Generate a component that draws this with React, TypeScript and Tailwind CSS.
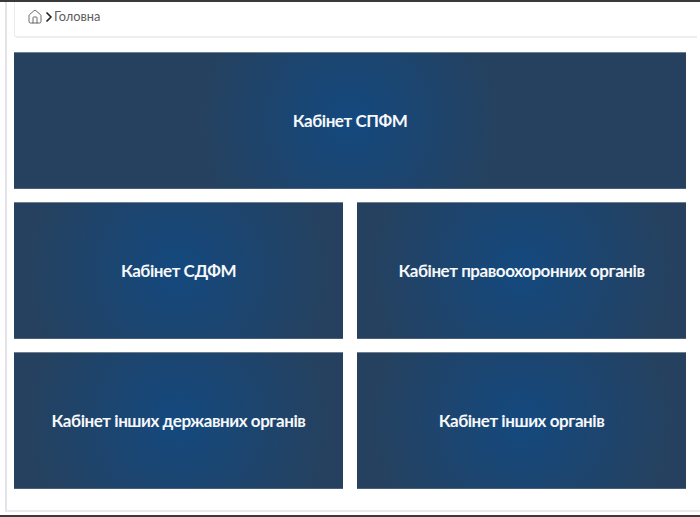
import { Home, ChevronRight } from 'lucide-react';

const cardClass =
  "flex items-center justify-center h-[136.6px] bg-[radial-gradient(circle_150px_at_center,#14497f_0%,#25415f_100%)] border-t border-t-[#6f7f90] border-b border-b-[#4b5f75] text-[#f6f8fa] text-[17px] font-bold tracking-[-0.45px]";

function Card({ title }: { title: string }) {
  return (
    <div className={cardClass}>
      <span>{title}</span>
    </div>
  );
}

export default function App() {
  return (
    <div className="h-[517px] w-[700px] overflow-hidden bg-[#3a3a3a] pt-[2px] pb-[2px] font-['Lato','Noto_Sans',sans-serif]">
      <div className="h-full bg-white pl-[5px] flex">
        <div className="flex-1 flex flex-col border-l-2 border-l-[#e4e4e8] border-b-2 border-b-[#e9e9ec] mb-[3px] pl-[7px] pr-[14px]">
          {/* Breadcrumb */}
          <div className="h-[36px] -mr-[11px] flex items-center pl-[13px] pb-[5px] border-l border-l-[#ececec] border-b-2 border-b-[#eeeeee] rounded-bl-[4px]">
            <Home size={16} strokeWidth={1.3} className="text-[#555] -ml-[1px]" />
            <ChevronRight size={16} strokeWidth={2.6} className="text-[#222] -ml-[2px] -mr-[3px]" />
            <span className="text-[12.8px] text-[#5c5c5c]">Головна</span>
          </div>

          {/* Cabinets */}
          <div className="mt-[14px] grid grid-cols-2 gap-x-[14px] gap-y-[13.6px]">
            <div className="col-span-2">
              <Card title="Кабінет СПФМ" />
            </div>
            <Card title="Кабінет СДФМ" />
            <Card title="Кабінет правоохоронних органів" />
            <Card title="Кабінет інших державних органів" />
            <Card title="Кабінет інших органів" />
          </div>
        </div>
      </div>
    </div>
  );
}
